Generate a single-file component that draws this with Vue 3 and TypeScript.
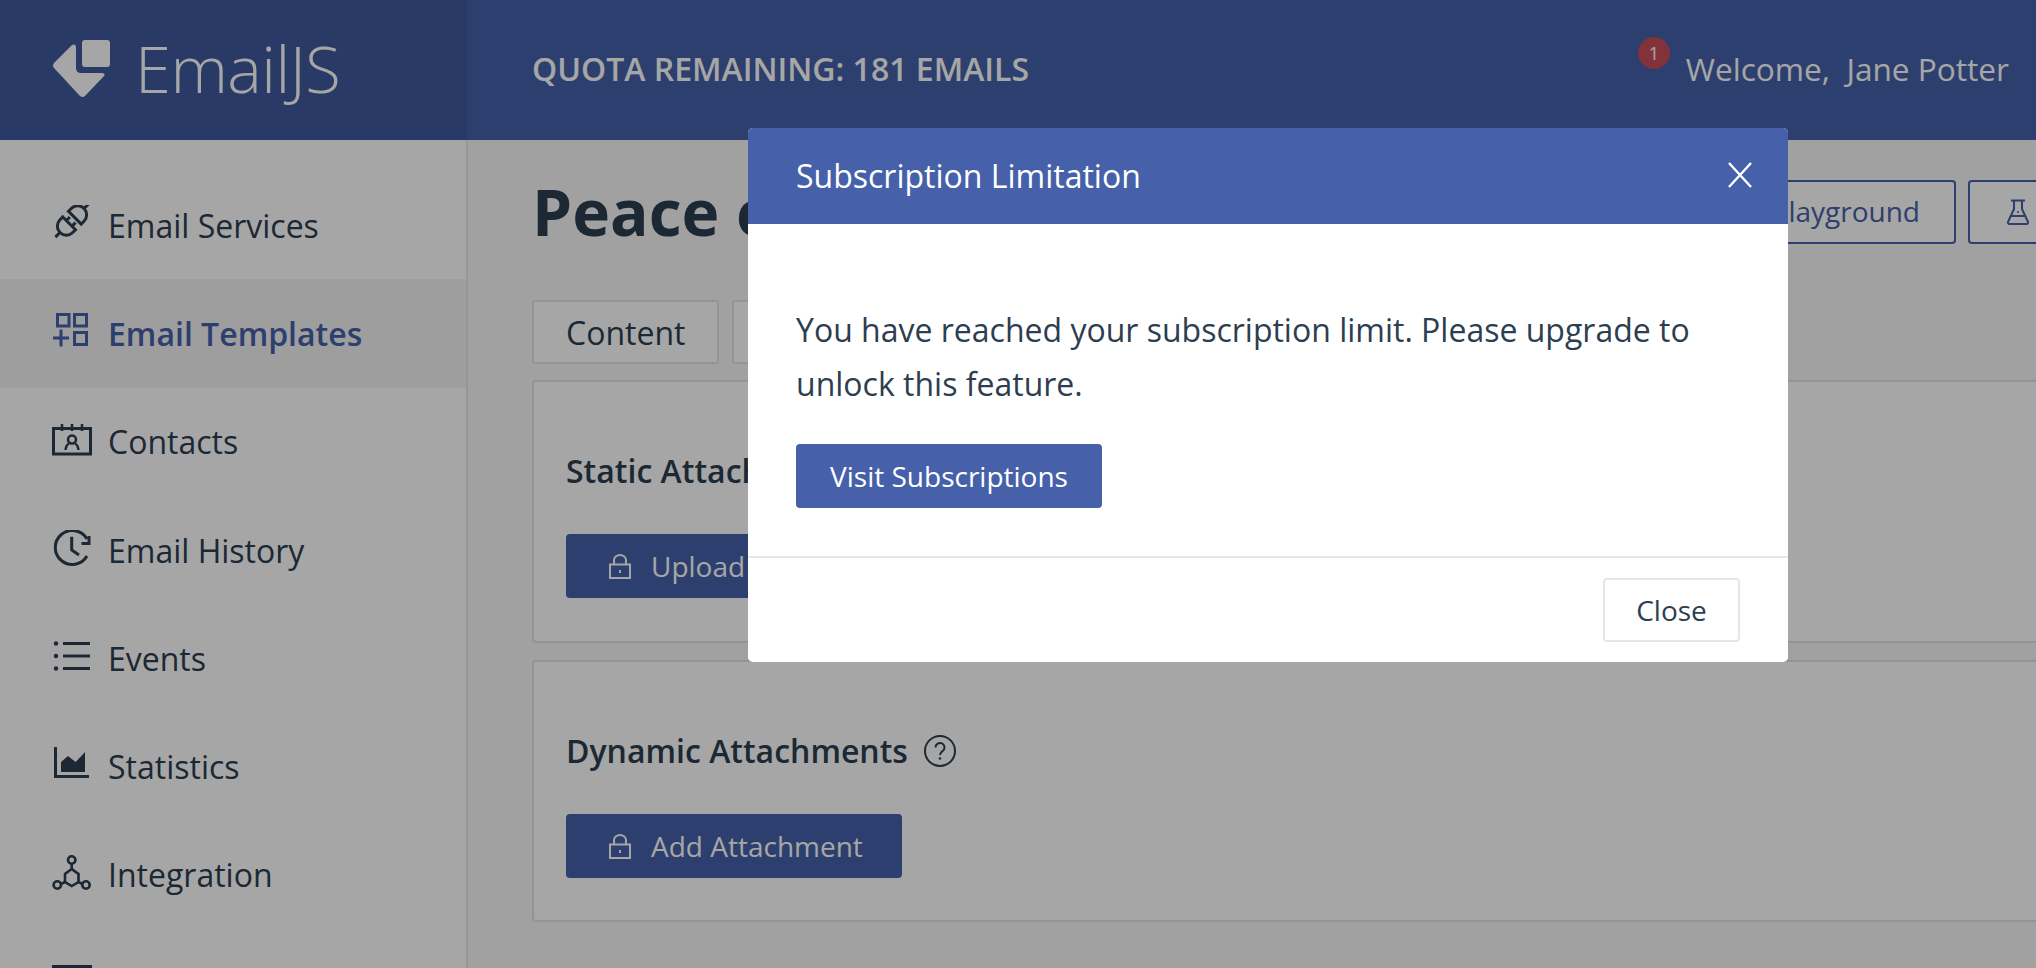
<script setup lang="ts">
const navItems = ['Email Services', 'Email Templates', 'Contacts', 'Email History', 'Events', 'Statistics', 'Integration', '']
</script>

<template>
  <div class="page">
    <header class="topbar">
      <div class="brand">
        <svg class="logo" viewBox="0 0 60 62" width="60" height="62">
          <rect x="30" y="2" width="28" height="27" rx="3" fill="#fff" />
          <path fill="#fff" d="M2 25L20 7Q24 5 24 10V30Q24 35 29 35H50Q54 36 52 38L33 58Q31 60 28 58L2 30Q0 28 2 25Z" />
        </svg>
        <span class="brand-name">EmailJS</span>
      </div>
      <div class="topbar-main">
        <span class="quota">QUOTA REMAINING: 181 EMAILS</span>
        <div class="user">
          <span class="badge">1</span>
          <span class="welcome">Welcome,&nbsp; Jane Potter</span>
        </div>
      </div>
    </header>
    <div class="body">
      <aside class="sidebar">
        <a v-for="(item, i) in navItems" :key="i" class="nav-item" :class="{ active: i === 1 }">
          <svg class="nav-icon" viewBox="0 0 40 40" width="40" height="40" fill="none" stroke="currentColor" stroke-width="3">
            <g v-if="i === 0" transform="translate(20 15.500) rotate(-45)">
              <path d="M-23.500 0H-17M17 0H23.500" />
              <path d="M-4 -9V9H-8A9 9 0 0 1 -8 -9Z" />
              <path d="M4 -9H8A9 9 0 0 1 8 9H4Z" />
              <path d="M-4 -4H1M-4 4H1" />
            </g>
            <g v-else-if="i === 1">
              <path d="M5.500 1.500H17V13H5.500ZM22.500 1.500H34.500V13H22.500ZM22.500 19.500H34.500V31.500H22.500ZM1 25H17M9 16.500V33.500" />
            </g>
            <g v-else-if="i === 2">
              <path d="M1.500 6.500H38.500V32H1.500Z" />
              <path d="M10 2V9M20 2V9M30 2V9" stroke-width="2.500" />
              <circle cx="20" cy="17.500" r="4" stroke-width="2.500" />
              <path d="M13.500 28Q14 23 17 21.500M26.500 28Q26 23 23 21.500" stroke-width="2.500" />
            </g>
            <g v-else-if="i === 3">
              <path d="M35 26A17 17 0 1 1 35 9" />
              <path d="M29.500 13.500H37V6" />
              <path d="M19.700 6.700V20L27 25" />
            </g>
            <g v-else-if="i === 4">
              <path d="M11 5.500H38M11 18H38M11 30.500H38" stroke-width="2.800" />
              <circle cx="4" cy="5.500" r="2.200" fill="currentColor" stroke="none" />
              <circle cx="4" cy="18" r="2.200" fill="currentColor" stroke="none" />
              <circle cx="4" cy="30.500" r="2.200" fill="currentColor" stroke="none" />
            </g>
            <g v-else-if="i === 5">
              <path d="M3.500 0V29.500H37" />
              <path d="M9 25V15L16 9L23.700 15L33 5V25Z" fill="currentColor" stroke="none" />
            </g>
            <g v-else-if="i === 6">
              <circle cx="19.700" cy="5" r="3.700" stroke-width="2.600" />
              <circle cx="5.300" cy="30" r="3.700" stroke-width="2.600" />
              <circle cx="34" cy="30" r="3.700" stroke-width="2.600" />
              <path d="M19.700 9V14L26.500 19V27L19.700 31L13 27V19L19.700 14M13 27L9 29M26.500 27L30.500 29" stroke-width="2.600" />
            </g>
            <g v-else>
              <path d="M0 3.500H40" />
            </g>
          </svg>
          <span v-if="item">{{ item }}</span>
        </a>
      </aside>
      <main class="content">
        <div class="title-row">
          <h1>Peace of Mind</h1>
          <div class="title-actions">
            <button class="outline">Playground</button>
            <button class="outline flask">
              <svg viewBox="0 0 24 26" width="24" height="26" fill="none" stroke="currentColor" stroke-width="2">
                <path d="M5 1.500H19M8 2V10L2 23A1.500 1.500 0 0 0 3.500 25H20.500A1.500 1.500 0 0 0 22 23L16 10V2M5 17H19" />
                <circle cx="12" cy="13" r="1" fill="currentColor" stroke="none" />
              </svg>
            </button>
          </div>
        </div>
        <div class="tabs">
          <span class="tab">Content</span>
          <span class="tab">Auto-Reply</span>
          <span class="tab">Attachments</span>
        </div>
        <section class="card first">
          <h3>Static Attachments</h3>
          <button class="lock-btn"><svg class="lock" viewBox="0 0 22 25" width="22" height="25" fill="none" stroke="currentColor" stroke-width="2"><path d="M1 10.500H21V24H1ZM5 10V6A6 5 0 0 1 17 6V10" /><path d="M11 16V19" /></svg>Upload Attachment</button>
        </section>
        <section class="card">
          <h3>Dynamic Attachments
            <svg class="help" viewBox="0 0 32 32" width="32" height="32" fill="none" stroke="currentColor" stroke-width="2"><circle cx="16" cy="16" r="15" /><path d="M11.500 12.500A4.500 4.500 0 1 1 18.500 16.200C16.900 17.300 16 18 16 20" /><circle cx="16" cy="23.500" r="1.300" fill="currentColor" stroke="none" /></svg>
          </h3>
          <button class="lock-btn"><svg class="lock" viewBox="0 0 22 25" width="22" height="25" fill="none" stroke="currentColor" stroke-width="2"><path d="M1 10.500H21V24H1ZM5 10V6A6 5 0 0 1 17 6V10" /><path d="M11 16V19" /></svg>Add Attachment</button>
        </section>
      </main>
    </div>
    <div class="overlay"></div>
    <div class="modal">
      <div class="modal-head">
        <span>Subscription Limitation</span>
        <svg viewBox="0 0 24 26" width="24" height="26" stroke="#fff" stroke-width="2.400"><path d="M1 1L23 25M23 1L1 25" /></svg>
      </div>
      <div class="modal-body">
        <p>You have reached your subscription limit. Please upgrade to unlock this feature.</p>
        <button class="primary">Visit Subscriptions</button>
      </div>
      <div class="modal-foot">
        <button class="close">Close</button>
      </div>
    </div>
  </div>
</template>

<style>
html, body { margin: 0; overflow: hidden; }
</style>

<style scoped>
* { box-sizing: border-box; }
.page {
  width: 2036px;
  height: 968px;
  position: relative;
  overflow: hidden;
  background: #fff;
  color: #2c3e50;
  font-family: "Open Sans", "Noto Sans", sans-serif;
}
button { font-family: inherit; cursor: pointer; }
.topbar { height: 140px; display: flex; background: #4661a9; color: #fff; }
.brand { width: 467px; background: #415a9e; display: flex; align-items: center; padding-left: 52px; }
.logo { margin-right: 23px; margin-bottom: 2px; }
.brand-name { font-size: 65px; font-weight: 300; letter-spacing: -0.5px; margin-bottom: 4px; }
.topbar-main { flex: 1; display: flex; align-items: center; justify-content: space-between; padding: 0 27px 4px 65px; }
.quota { font-size: 32px; font-weight: 600; }
.user { display: flex; align-items: center; position: relative; }
.badge {
  position: absolute; left: -48px; top: -10px; width: 32px; height: 32px; border-radius: 50%;
  background: #ca4d58; font-size: 19px; display: flex; align-items: center; justify-content: center;
}
.welcome { font-size: 31.600px; }
.body { display: flex; height: 828px; }
.sidebar { width: 468px; flex: none; border-right: 2px solid #e6e6e6; padding-top: 31px; }
.nav-item { display: flex; align-items: center; height: 108.300px; padding-left: 52px; font-size: 32px; gap: 16px; }
.nav-item.active { background: #f3f3f3; color: #4661a9; font-weight: 600; }
.nav-icon { flex: none; }
.content { flex: 1; min-width: 0; padding: 40px 0 0 64px; background: #f7f7f7; }
.title-row { display: flex; align-items: center; justify-content: space-between; height: 64px; }
h1 { margin: 0; font-size: 64px; font-weight: 700; line-height: 64px; white-space: nowrap; }
.title-actions { display: flex; gap: 12px; margin-right: -86px; }
.outline {
  height: 64px; background: #fff; border: 2px solid #4661a9; border-radius: 4px; color: #4661a9;
  font-size: 28px; padding: 0 34px 3px 32px;
}
.flask { width: 154px; text-align: left; padding: 4px 0 0 36px; }
.tabs { display: flex; gap: 13px; margin-top: 56px; }
.tab { height: 64px; background: #fff; border: 2px solid #e4e4e4; border-radius: 3px; display: flex; align-items: center; padding: 0 32px; font-size: 32px; }
.card { background: #fff; border: 2px solid #e4e4e4; border-right: 0; border-radius: 4px 0 0 4px; height: 262px; margin-top: 17px; padding: 66px 32px 0; }
.card.first { margin-top: 16px; height: 263px; }
h3 { margin: 0; font-size: 32px; font-weight: 600; line-height: 46px; display: flex; align-items: center; gap: 16px; }
.lock-btn {
  margin-top: 40px; height: 64px; border: 0; border-radius: 4px; background: #4661a9; color: #fff; font-size: 28px;
  display: flex; align-items: center; padding: 0 39px 0 43px; gap: 20px;
}
.overlay { position: absolute; inset: 0; background: rgba(0, 0, 0, 0.35); }
.modal {
  position: absolute; left: 748px; top: 128px; width: 1040px; height: 534px; background: #fff; border-radius: 5px;
  display: flex; flex-direction: column; overflow: hidden;
}
.modal-head { height: 96px; background: #4661a9; color: #fff; display: flex; align-items: center; justify-content: space-between; padding: 0 36px 2px 48px; font-size: 32px; }
.modal-body { height: 334px; padding: 79px 48px 0; border-bottom: 2px solid #e6e6e6; }
p { margin: 0 0 33px; font-size: 32px; line-height: 54px; }
.primary { height: 64px; width: 306px; border: 0; border-radius: 4px; background: #4661a9; color: #fff; font-size: 28px; }
.modal-foot { flex: 1; display: flex; justify-content: flex-end; align-items: center; padding-right: 48px; }
.close { width: 137px; height: 64px; background: #fff; border: 2px solid #e6e6e6; border-radius: 4px; color: #2c3e50; font-size: 28px; }
</style>
